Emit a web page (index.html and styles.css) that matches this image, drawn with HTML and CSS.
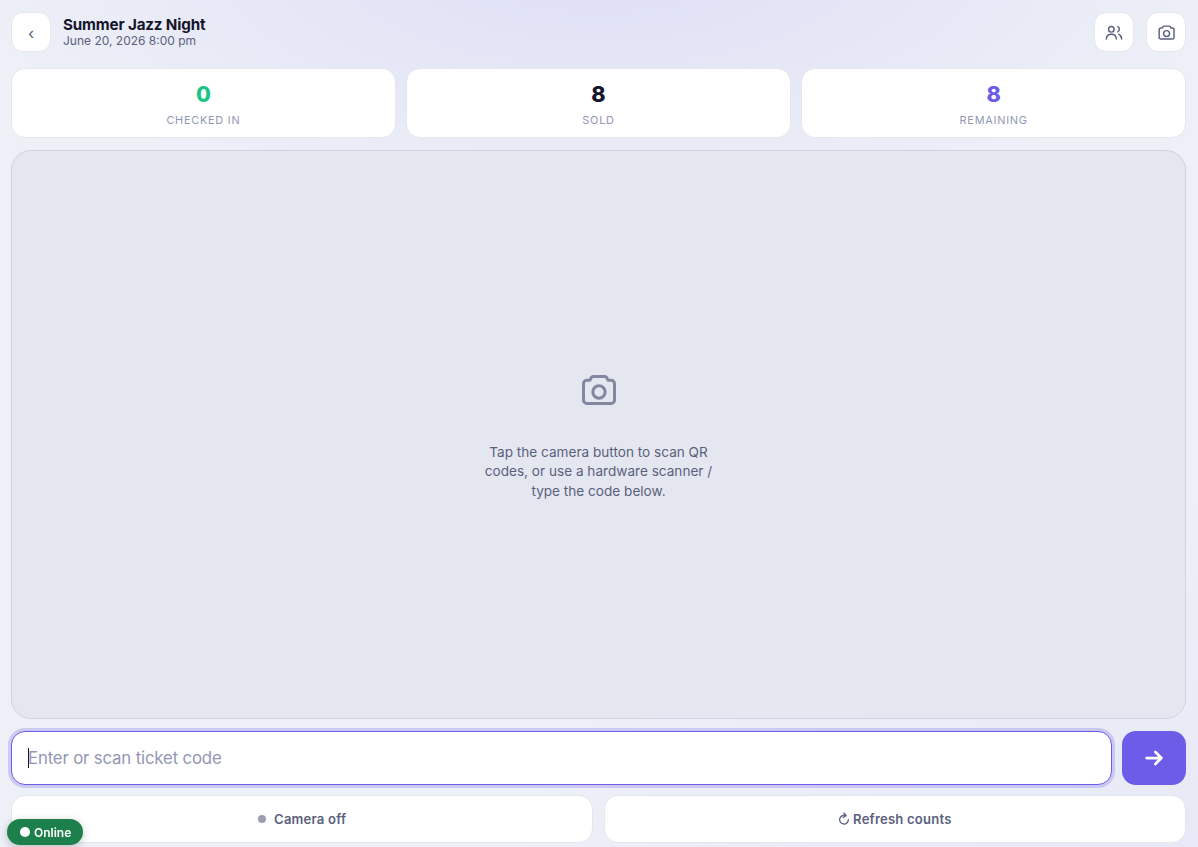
FILE: index.html
```
<!DOCTYPE html>
<html lang="en">

<head>
    <meta charset="UTF-8">
    <meta name="viewport" content="width=device-width, initial-scale=1.0">
    <title>Check-in</title>
    <link rel="stylesheet" href="styles.css">
</head>

<body>
    <div class="app">
        <header class="topbar">
            <button class="icon-btn back" aria-label="Back">‹</button>
            <div class="event">
                <h1>Summer Jazz Night</h1>
                <p>June 20, 2026 8:00 pm</p>
            </div>
            <button class="icon-btn guests" aria-label="Guests">
                <svg viewBox="0 0 24 24">
                    <circle cx="9.2" cy="7.9" r="3.5" />
                    <path d="M2.9 20c.3-3.9 2.800-5.900 6.300-5.900s6 2 6.300 5.900" />
                    <path d="M17.300 4.600c1.200.7 1.900 1.800 1.900 3.300s-.7 2.500-1.900 3.200" />
                    <path d="M18.500 14c2.100 1.100 3.300 3.200 3.600 6" />
                </svg>
            </button>
            <button class="icon-btn" aria-label="Camera">
                <svg viewBox="0 0 24 24">
                    <path d="M4.700 6.200h1.300a1 1 0 0 0 1-.8c.2-.9.800-1.500 1.700-1.500h6.600c.9 0 1.500.6 1.700 1.500a1 1 0 0 0 1 .8h1.300a2 2 0 0 1 2 2v9.900a2 2 0 0 1-2 2H4.700a2 2 0 0 1-2-2V8.200a2 2 0 0 1 2-2z" />
                    <circle cx="12" cy="13.200" r="3.700" />
                </svg>
            </button>
        </header>

        <section class="stats">
            <div class="stat">
                <b class="green">0</b>
                <span>Checked in</span>
            </div>
            <div class="stat">
                <b>8</b>
                <span>Sold</span>
            </div>
            <div class="stat">
                <b class="purple">8</b>
                <span>Remaining</span>
            </div>
        </section>

        <main class="stage">
            <svg viewBox="0 0 24 24">
                <path d="M4.700 6.200h1.300a1 1 0 0 0 1-.8c.2-.9.800-1.500 1.700-1.500h6.600c.9 0 1.500.6 1.700 1.500a1 1 0 0 0 1 .8h1.300a2 2 0 0 1 2 2v9.900a2 2 0 0 1-2 2H4.700a2 2 0 0 1-2-2V8.200a2 2 0 0 1 2-2z" />
                <circle cx="12" cy="13.200" r="3.700" />
            </svg>
            <p>Tap the camera button to scan QR codes, or use a hardware scanner / type the code below.</p>
        </main>

        <form class="entry">
            <div class="field">
                <input type="text" placeholder="Enter or scan ticket code">
                <i class="caret"></i>
            </div>
            <button class="go" type="button" aria-label="Check in">
                <svg viewBox="0 0 24 24">
                    <path d="M4 12h15M13.500 5.500l6.500 6.500-6.500 6.500" />
                </svg>
            </button>
        </form>

        <div class="actions">
            <button><i class="dot"></i>Camera off</button>
            <button>
                <svg viewBox="0 0 12 14">
                    <path d="M8 3.700A4.400 4.400 0 1 0 10.400 7.600M5.900 1l2.300 2.700-3.100 1.700" />
                </svg>
                Refresh counts
            </button>
        </div>
    </div>

    <div class="online"><i></i>Online</div>
</body>

</html>
```
FILE: styles.css
```
* {
    box-sizing: border-box;
    margin: 0;
}

body {
    height: 100vh;
    overflow: hidden;
    font-family: Inter, sans-serif;
    color: #14152b;
    background:
        radial-gradient(ellipse 640px 260px at 50% -5%, rgba(108, 92, 231, 0.12), transparent 100%),
        radial-gradient(ellipse 700px 400px at 100% 105%, rgba(108, 92, 231, 0.05), transparent 100%),
        #edf0f7;
}

button,
input {
    font-family: inherit;
}

svg {
    fill: none;
    stroke: currentColor;
    stroke-width: 1.8;
    stroke-linecap: round;
    stroke-linejoin: round;
}

.app {
    height: 100%;
    padding: 12px 12px 4px 11px;
    display: flex;
    flex-direction: column;
}

.topbar {
    display: flex;
    align-items: center;
    gap: 12px;
    height: 40px;
}

.icon-btn {
    width: 40px;
    height: 40px;
    padding: 1px 0 0 1px;
    display: flex;
    align-items: center;
    justify-content: center;
    background: #fff;
    border: 1px solid #e6e6ee;
    border-radius: 12px;
    color: #5b5f7d;
    font-size: 16px;
}

.back,
.guests {
    padding-left: 0;
}

.icon-btn svg {
    width: 19.2px;
    height: 19.2px;
}

.event {
    flex: 1;
}

.event h1 {
    font-size: 15.2px;
    line-height: 18px;
    font-weight: 700;
    letter-spacing: -0.15px;
}

.event p {
    font-size: 12px;
    line-height: 14px;
    color: #5b5f7d;
}

.stats {
    display: grid;
    grid-template-columns: repeat(3, 1fr);
    gap: 10.4px;
    height: 70px;
    margin-top: 16px;
}

.stat {
    display: flex;
    flex-direction: column;
    align-items: center;
    padding-top: 12px;
    background: #fff;
    border: 1px solid #e6e6ee;
    border-radius: 14px;
}

.stat b {
    font-size: 21.6px;
    line-height: 27px;
    font-weight: 800;
}

.stat span {
    margin-top: 5px;
    font-size: 10.9px;
    line-height: 14px;
    letter-spacing: 0.75px;
    text-transform: uppercase;
    color: #9397b5;
}

.stat .green {
    color: #1bc585;
}

.stat .purple {
    color: #6c5ce7;
}

.stage {
    flex: 1;
    margin-top: 12px;
    padding-top: 2px;
    display: flex;
    flex-direction: column;
    align-items: center;
    justify-content: center;
    background: #e4e7f0;
    border: 1px solid #d0d3df;
    border-radius: 20px;
    color: #5b5f7d;
}

.stage svg {
    width: 40px;
    height: 40px;
    opacity: 0.7;
}

.stage p {
    width: 240px;
    margin-top: 33px;
    font-size: 13.6px;
    line-height: 19.6px;
    text-align: center;
}

.entry {
    display: flex;
    gap: 10px;
    height: 54px;
    margin-top: 12px;
}

.field {
    flex: 1;
    position: relative;
}

.field input {
    width: 100%;
    height: 100%;
    padding: 0 16px;
    background: #fff;
    border: 1px solid #6c5ce7;
    border-radius: 14px;
    outline: none;
    box-shadow: 0 0 0 3px rgba(108, 92, 231, 0.25);
    font-size: 16.8px;
    letter-spacing: -0.16px;
}

.field input::placeholder {
    color: #9397b5;
}

.caret {
    position: absolute;
    left: 17px;
    top: 17px;
    width: 1px;
    height: 20px;
    background: #14152b;
}

.go {
    width: 64px;
    padding: 0;
    display: flex;
    align-items: center;
    justify-content: center;
    background: #6c5ce7;
    border: none;
    border-radius: 14px;
    color: #fff;
}

.go svg {
    width: 22px;
    height: 22px;
    stroke-width: 3;
}

.actions {
    display: grid;
    grid-template-columns: 1fr 1fr;
    gap: 10.4px;
    height: 48px;
    margin-top: 10px;
}

.actions button {
    display: flex;
    align-items: center;
    justify-content: center;
    background: #fff;
    border: 1px solid #e6e6ee;
    border-radius: 14px;
    color: #5b5f7d;
    font-size: 13.1px;
    font-weight: 600;
    letter-spacing: 0.2px;
}

.actions svg {
    width: 12px;
    height: 14px;
    margin-right: 3px;
    stroke-width: 1.3;
}

.dot {
    width: 8px;
    height: 8px;
    margin-right: 8px;
    border-radius: 50%;
    background: #9a9eb0;
}

/* connection badge, sits on top of the page */
.online {
    position: fixed;
    left: 7px;
    bottom: 2px;
    width: 76px;
    height: 26px;
    padding-left: 13px;
    display: flex;
    align-items: center;
    gap: 4px;
    background: #1c7f4c;
    border-radius: 13px;
    box-shadow: 0 2px 8px rgba(0, 0, 0, 0.22);
    color: #fff;
    font-size: 12px;
    font-weight: 600;
}

.online i {
    width: 10px;
    height: 10px;
    border-radius: 50%;
    background: #fff;
}
```
